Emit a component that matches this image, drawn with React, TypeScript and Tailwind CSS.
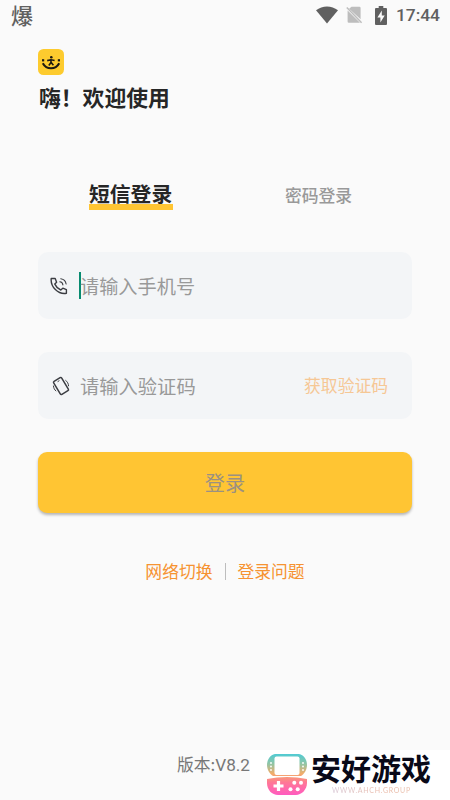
import React, { useState } from 'react';

type LoginMode = 'sms' | 'password';

function StatusBar() {
  return (
    <header className="flex h-[30px] items-center justify-between pl-[11px] pr-[10px] text-[#606060]">
      <span className="h-[30px] text-[22px] leading-[28px] font-medium">爆</span>
      <div className="flex items-center">
        <svg width="22" height="18" viewBox="0 0 22 18" fill="currentColor">
          <path d="M0 4.2C6.4-.9 15.6-.9 22 4.2L11 17.6z" />
        </svg>
        <svg className="ml-[8px]" width="17" height="18" viewBox="0 0 17 18">
          <path d="M5.5.8H13.4Q14.6.8 14.6 2V13.2L3.1 2.8zM1.6 4.4L14 16.8H2.8Q1.6 16.8 1.6 15.6z" fill="#bdbdbd" />
          <path d="M.8 1.6L15.6 16.8" stroke="#bdbdbd" strokeWidth="1.5" />
        </svg>
        <svg className="ml-[12px]" width="12" height="19" viewBox="0 0 12 19">
          <path d="M3.7 0H8.3V2H11Q12 2 12 3V18Q12 19 11 19H1Q0 19 0 18V3Q0 2 1 2H3.7z" fill="currentColor" />
          <path d="M6.8 4.5L2.4 11.6H5.4V16.6L9.7 9.6H6.8z" fill="#fafafa" />
        </svg>
        <span className="ml-[9px] font-['Roboto',sans-serif] text-[17.4px] leading-[30px] font-medium">17:44</span>
      </div>
    </header>
  );
}

function AppLogo() {
  return (
    <svg width="26" height="26" viewBox="0 0 26 26">
      <rect width="26" height="26" rx="5.5" fill="#fdcb2e" />
      <path d="M4.8 14.2C8.5 21 17.5 21 21.2 14.2" fill="none" stroke="#1d1a12" strokeWidth="2.1" />
      <rect x="4" y="10.2" width="2.2" height="2.2" fill="#1d1a12" />
      <rect x="19.8" y="10.2" width="2.2" height="2.2" fill="#1d1a12" />
      <circle cx="13.3" cy="8.2" r="1.3" fill="#1d1a12" />
      <path d="M9.2 11.6L13 10.8 16.6 11.5M13 10.5V13.5L10.8 16.4M13 13.2L15.4 16.2" fill="none" stroke="#1d1a12" strokeWidth="1.6" />
    </svg>
  );
}

function PhoneIcon() {
  return (
    <svg width="18" height="18" viewBox="0 0 18 18" fill="none" stroke="#3b3d42" strokeWidth="1.4" strokeLinecap="round" strokeLinejoin="round">
      <path d="M1.2 1.5H5.2L6.6 5.2 4.8 7.1C6 9.8 8 11.8 10.8 13L12.8 11.2 16.4 12.7V16.3C8 17.6.4 9.8 1.2 1.5z" />
      <path d="M9.8 4.8C11.5 5 12.7 6.2 12.9 7.9" strokeWidth="1.1" />
      <path d="M10.8 1.7C13.8 2.2 15.7 4.2 16.1 7" strokeWidth="1.1" />
    </svg>
  );
}

function CodeIcon() {
  return (
    <svg width="18" height="20" viewBox="0 0 18 20" fill="none" stroke="#3b3d42" strokeLinejoin="round">
      <rect x="4.3" y="2.4" width="9.4" height="15.2" rx="1.2" strokeWidth="1.5" transform="rotate(-31 9 10)" />
      <path d="M1.4 9.6C1.6 12 2.5 13.8 4.2 15.2M13.4 4.2C15.3 5.6 16.5 7.6 16.6 10.2" strokeWidth="1" />
      <path d="M5.6 5.7L7.4 4.6" strokeWidth="1" />
    </svg>
  );
}

function SiteBadge() {
  return (
    <div className="absolute top-[750px] left-[250px] flex h-[50px] w-[200px] bg-white">
      <svg className="mt-[4px] ml-[17px] shrink-0" width="40" height="41" viewBox="0 0 40 41">
        <defs>
          <linearGradient id="console" x1="0" y1="0" x2="0" y2="41" gradientUnits="userSpaceOnUse">
            <stop offset="0" stopColor="#50cbd4" />
            <stop offset=".24" stopColor="#91c5a5" />
            <stop offset=".48" stopColor="#f3ad69" />
            <stop offset=".7" stopColor="#ff7797" />
            <stop offset="1" stopColor="#ff5bc0" />
          </linearGradient>
        </defs>
        <path d="M8 0H32C37 1 40 6 40 11S37 20 34 22H6C3 20 0 16 0 11S3 1 8 0z" fill="url(#console)" />
        <rect x="7.5" y="2.5" width="25" height="18.5" rx="2" fill="#fff" />
        <path d="M0 25Q20 21 40 25V29C40 36 34 41 29 41H11C5 41 0 36 0 29z" fill="url(#console)" />
        <path d="M11.5 27V37M6.5 32H16.5" stroke="#fff" strokeWidth="3.2" />
        <g fill="#fff">
          <circle cx="27.3" cy="28.8" r="2" />
          <circle cx="34" cy="28.8" r="2" />
          <circle cx="23.5" cy="35.2" r="2" />
          <circle cx="30.7" cy="35.2" r="2" />
          <circle cx="4" cy="9" r=".9" />
          <circle cx="4" cy="12.5" r=".9" />
          <circle cx="4" cy="16" r=".9" />
          <circle cx="36" cy="9" r=".9" />
          <circle cx="36" cy="12.5" r=".9" />
          <circle cx="36" cy="16" r=".9" />
        </g>
      </svg>
      <div className="ml-[4px] flex flex-col whitespace-nowrap">
        <span className="h-[36px] text-[30px] leading-[35px] font-bold text-[#090918]">安好游戏</span>
        <span className="ml-[21px] bg-linear-to-r from-[#d8c8d6] via-[#eab7a5] to-[#e9c4ae] bg-clip-text font-['Lato',sans-serif] text-[7px] leading-[9px] tracking-[0.7px] text-transparent">
          WWW.AHCH.GROUP
        </span>
      </div>
    </div>
  );
}

export default function App() {
  const [mode, setMode] = useState<LoginMode>('sms');

  return (
    <div className="relative flex h-[800px] w-[450px] flex-col overflow-hidden bg-[#fafafa] font-['Noto_Sans_CJK_SC',sans-serif]">
      <StatusBar />

      {/* Greeting */}
      <div className="px-[38px] pt-[19px]">
        <AppLogo />
        <h1 className="mt-[6px] ml-px text-[21.8px] leading-[32px] font-bold text-[#262626]">嗨！欢迎使用</h1>
      </div>

      {/* Login mode tabs */}
      <div className="mt-[65px] grid h-[32px] grid-cols-2 px-[38px]">
        <button
          onClick={() => setMode('sms')}
          className="mt-[3px] mr-px flex h-[30px] w-[84px] justify-self-center bg-[linear-gradient(#ffc533,#ffc533)] bg-[length:84px_6px] bg-[position:0_23px] bg-no-repeat text-[20.8px] leading-[25px] font-bold whitespace-nowrap text-[#262626]"
        >
          短信登录
        </button>
        <button
          onClick={() => setMode('password')}
          className="justify-self-center text-[16.8px] leading-[32px] font-medium text-[#999999]"
        >
          密码登录
        </button>
      </div>

      {/* Form */}
      <div className="mt-[42px] px-[38px]" data-mode={mode}>
        <div className="flex h-[67px] items-center rounded-[10px] bg-[#f3f5f7] pl-[12px]">
          <PhoneIcon />
          <span className="ml-[11px] h-[27px] w-[2px] shrink-0 bg-[#088b70]" />
          <span className="-ml-[1px] text-[19.2px] leading-[28px] text-[#999999]">请输入手机号</span>
        </div>
        <div className="mt-[33px] flex h-[67px] items-center rounded-[10px] bg-[#f3f5f7] pr-[24px] pl-[14px]">
          <CodeIcon />
          <span className="ml-[10px] text-[19.3px] leading-[28px] text-[#999999]">请输入验证码</span>
          <button className="mb-[2px] ml-auto text-[16.8px] leading-[28px] text-[#f6c795]">获取验证码</button>
        </div>
        <button className="mt-[33px] h-[61px] w-full rounded-[9px] bg-[#ffc533] text-[20.2px] leading-[61px] text-[#9b9181] shadow-[0_2px_3px_rgba(0,0,0,0.28)]">
          登录
        </button>
      </div>

      {/* Links */}
      <div className="mt-[45px] flex items-center justify-center text-[16.8px] leading-[26px] text-[#f69331]">
        <button>网络切换</button>
        <span className="mx-[12px] h-[17px] w-px bg-[#bdbdbd]" />
        <button>登录问题</button>
      </div>

      <p className="mt-auto mb-[22px] ml-[177px] text-[16.8px] leading-[26px] text-[#777777]">
        版本:<span className="font-['Roboto',sans-serif] text-[17.2px]">V8.2</span>
      </p>

      <SiteBadge />
    </div>
  );
}
